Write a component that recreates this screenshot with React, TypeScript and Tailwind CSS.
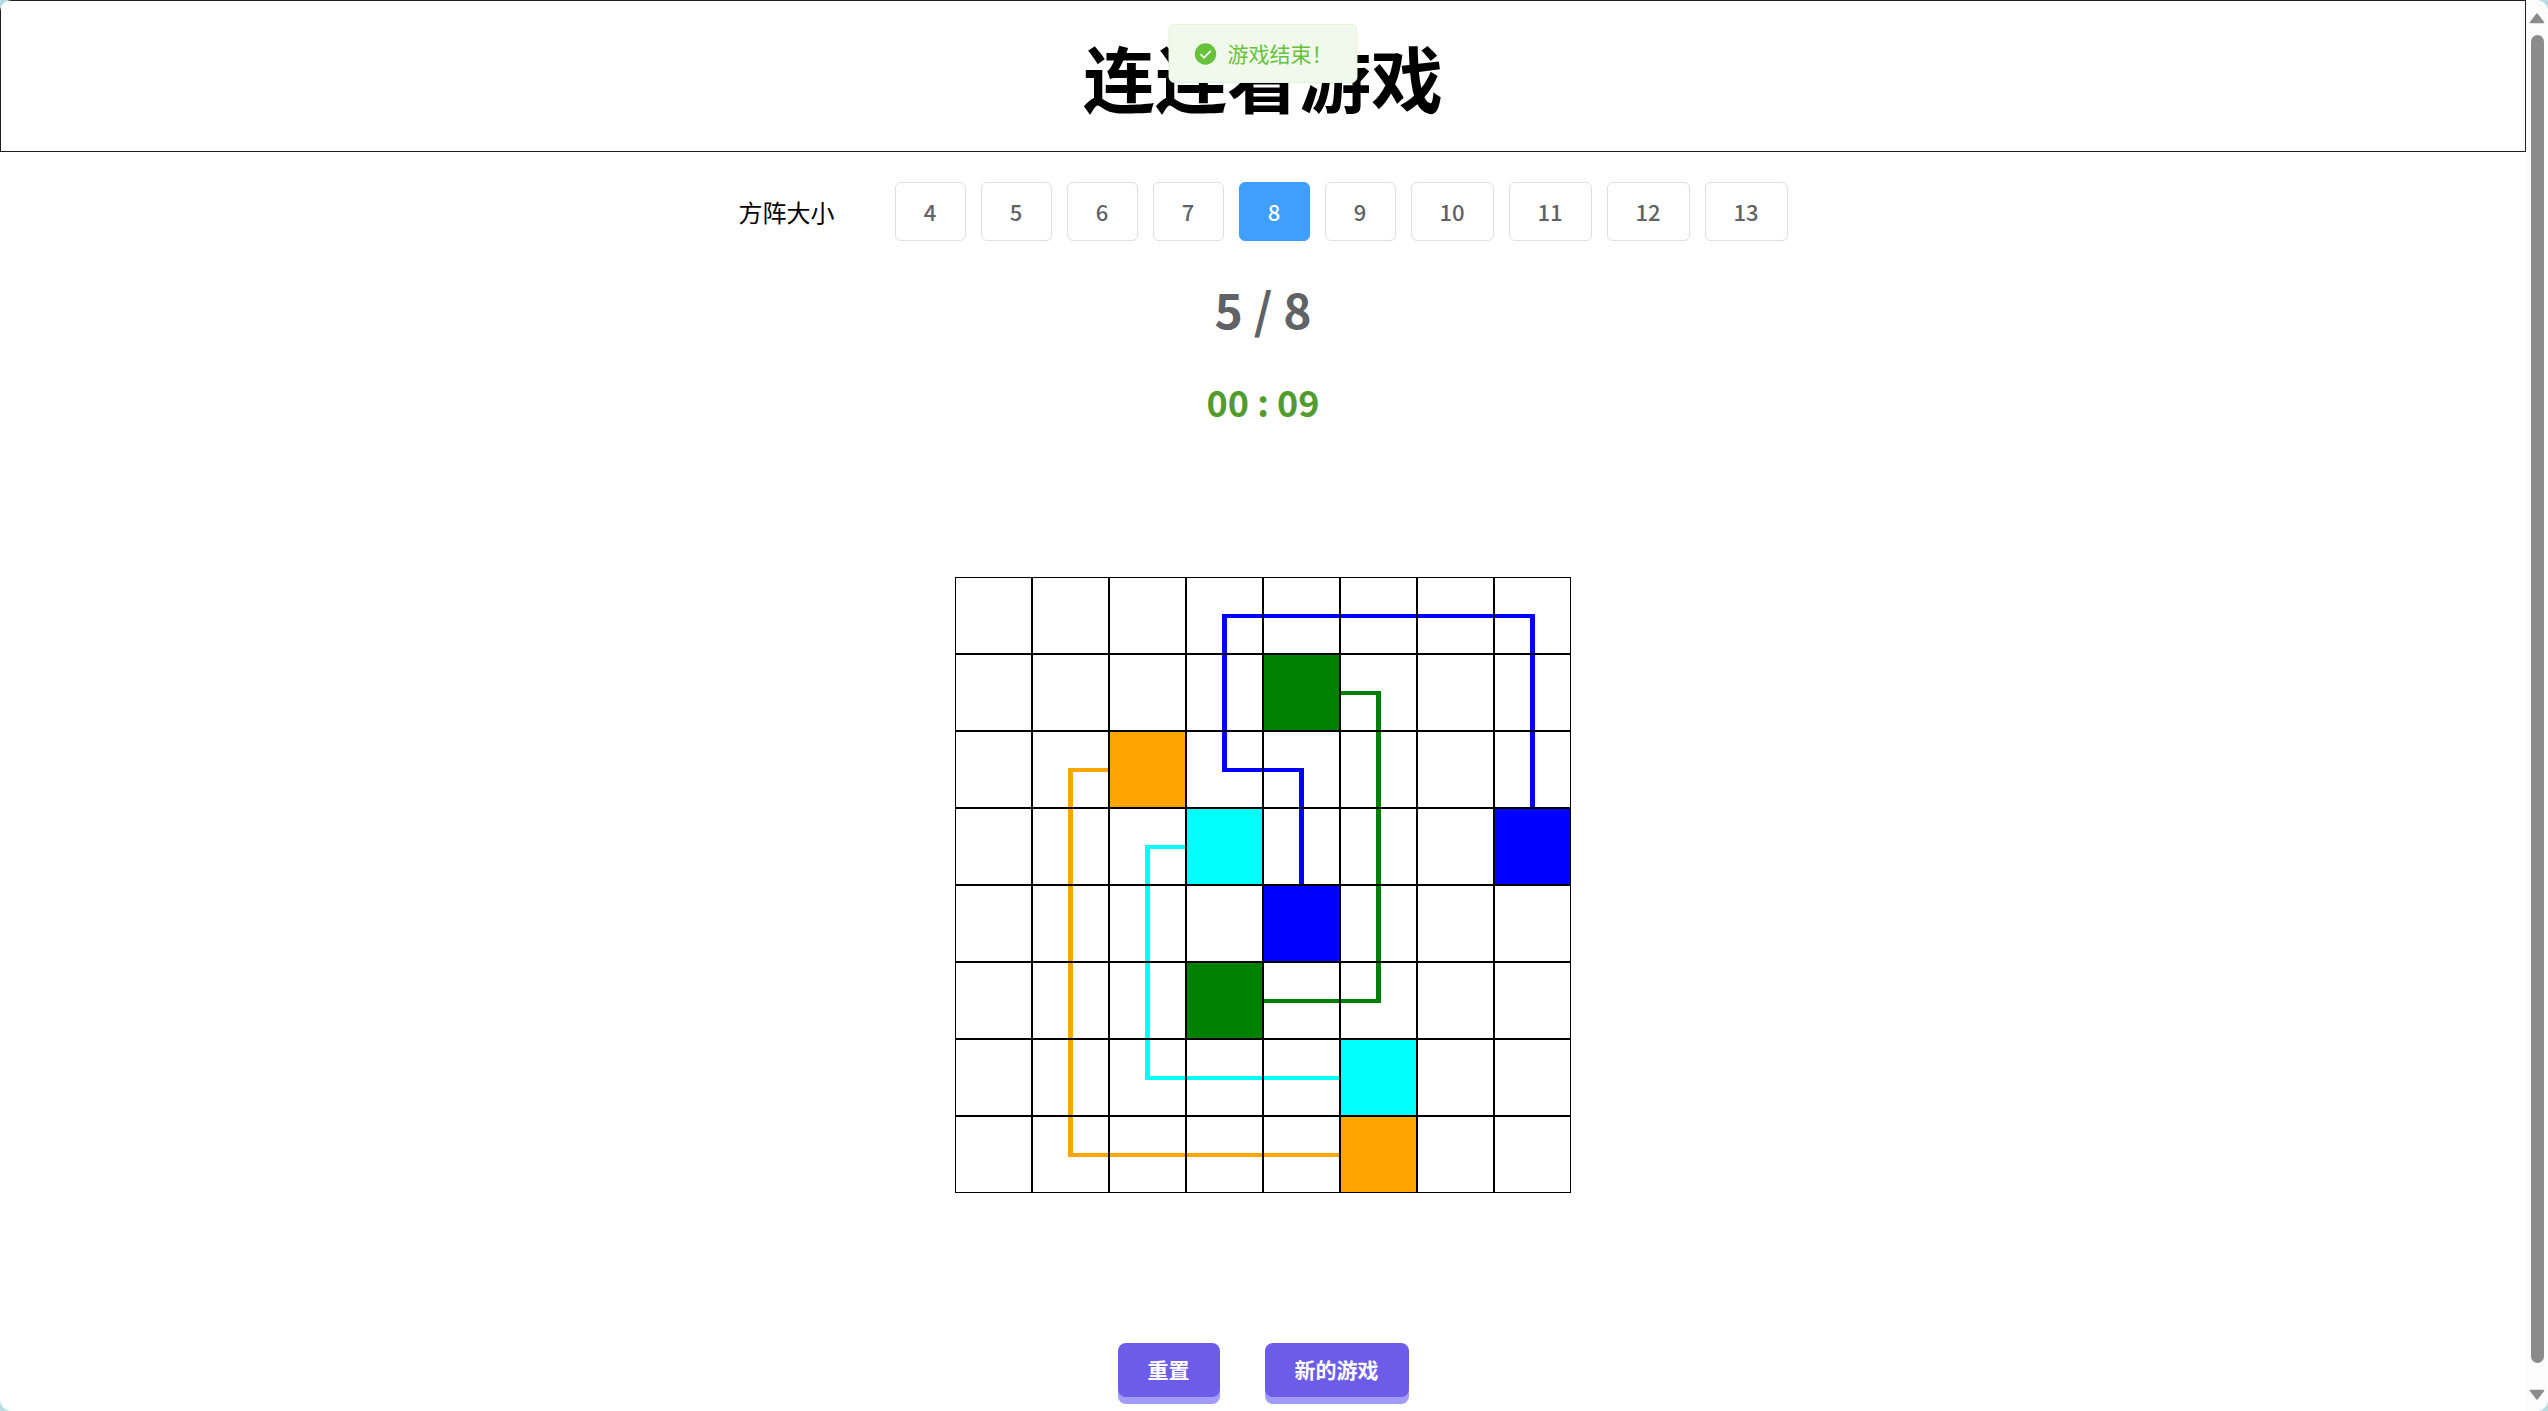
import { useState } from "react";

type Color = "blue" | "green" | "orange" | "cyan";

const FILL: Record<Color, string> = {
  blue: "bg-[#0000ff]",
  green: "bg-[#008000]",
  orange: "bg-[#ffa500]",
  cyan: "bg-[#00ffff]",
};

const SIZES = [4, 5, 6, 7, 8, 9, 10, 11, 12, 13];

// Each path runs from one coloured square to its partner, as [row, column] turning points.
const PATHS: { color: Color; points: [number, number][] }[] = [
  { color: "blue", points: [[4, 4], [2, 4], [2, 3], [0, 3], [0, 7], [3, 7]] },
  { color: "green", points: [[1, 4], [1, 5], [5, 5], [5, 3]] },
  { color: "orange", points: [[2, 2], [2, 1], [7, 1], [7, 5]] },
  { color: "cyan", points: [[3, 3], [3, 2], [6, 2], [6, 5]] },
];

interface CellState {
  color?: Color;
  solid?: boolean;
  up?: boolean;
  down?: boolean;
  left?: boolean;
  right?: boolean;
}

function buildBoard(size: number): CellState[] {
  const cells: CellState[] = Array.from({ length: size * size }, () => ({}));
  for (const { color, points } of PATHS) {
    let [r, c] = points[0];
    cells[r * size + c].solid = true;
    for (const [tr, tc] of points.slice(1)) {
      while (r !== tr || c !== tc) {
        const dr = Math.sign(tr - r);
        const dc = Math.sign(tc - c);
        const from = cells[r * size + c];
        const to = cells[(r + dr) * size + c + dc];
        from.color = color;
        to.color = color;
        if (dr > 0) (from.down = true), (to.up = true);
        if (dr < 0) (from.up = true), (to.down = true);
        if (dc > 0) (from.right = true), (to.left = true);
        if (dc < 0) (from.left = true), (to.right = true);
        r += dr;
        c += dc;
      }
    }
    cells[r * size + c].solid = true;
  }
  return cells;
}

function Cell({ cell }: { cell: CellState }) {
  const fill = cell.color ? FILL[cell.color] : "";
  if (cell.solid) return <div className={`size-[77px] border border-black ${fill}`} />;
  return (
    <div className="grid size-[77px] grid-cols-[35px_5px_35px] grid-rows-[36px_4px_35px] border border-black">
      {cell.color && <span className={`col-start-2 row-start-2 ${fill}`} />}
      {cell.up && <span className={`col-start-2 row-start-1 ${fill}`} />}
      {cell.down && <span className={`col-start-2 row-start-3 ${fill}`} />}
      {cell.left && <span className={`col-start-1 row-start-2 ${fill}`} />}
      {cell.right && <span className={`col-start-3 row-start-2 ${fill}`} />}
    </div>
  );
}

function Toast({ text }: { text: string }) {
  return (
    <div
      role="alert"
      className="absolute top-6 left-1/2 flex h-[59px] -translate-x-1/2 items-center gap-2.5 rounded-md border border-[#e1f3d8] bg-[#f0f9eb] px-6 text-[21px] leading-[21px] whitespace-nowrap text-[#67c23a]"
    >
      <svg viewBox="0 0 24 24" className="size-6" aria-hidden="true">
        <circle cx="12" cy="12" r="10.7" fill="#67c23a" />
        <path d="M7 12.2l3.5 3.5 6.8-6.8" fill="none" stroke="#f0f9eb" strokeWidth="1.8" />
      </svg>
      {text}
    </div>
  );
}

function ScrollBar() {
  return (
    <div className="flex w-[22px] shrink-0 flex-col items-center bg-[#fcfcfc] pt-3 pb-2.5" aria-hidden="true">
      <svg viewBox="0 0 16 12" className="h-3 w-4">
        <path d="M8 2L14.5 10.5H1.5Z" fill="#8b8b8b" stroke="#8b8b8b" strokeWidth="1.5" strokeLinejoin="round" />
      </svg>
      <div className="mt-[11px] mb-[26px] w-[13px] flex-1 rounded-full bg-[#8b8b8b]" />
      <svg viewBox="0 0 16 12" className="h-3 w-4">
        <path d="M8 10L14.5 1.5H1.5Z" fill="#8b8b8b" stroke="#8b8b8b" strokeWidth="1.5" strokeLinejoin="round" />
      </svg>
    </div>
  );
}

function ActionButton({ children }: { children: string }) {
  return (
    <button
      type="button"
      className="h-[54px] rounded-lg bg-[#6c5ce7] px-[30px] text-[21px] font-bold text-white shadow-[0_7px_0_#a29bfe]"
    >
      {children}
    </button>
  );
}

export default function App() {
  const [size, setSize] = useState(8);
  const board = buildBoard(8);

  return (
    <div className="min-h-screen bg-[#b9dce0] font-['Noto_Sans_CJK_SC',sans-serif]">
      <div className="flex min-h-screen overflow-hidden rounded-xl bg-white">
        <main className="relative flex min-w-0 flex-1 flex-col items-center">
          <header className="flex h-[152px] w-full items-center justify-center border border-[#1f1f1f]">
            <h1 className="text-7xl font-bold text-black">连连看游戏</h1>
          </header>
          <Toast text="游戏结束！" />

          <div className="mt-[30px] flex items-center gap-[60px]">
            <span id="size-label" className="text-2xl text-black">
              方阵大小
            </span>
            <div role="group" aria-labelledby="size-label" className="flex gap-[15px]">
              {SIZES.map((n) => (
                <button
                  key={n}
                  type="button"
                  aria-pressed={n === size}
                  onClick={() => setSize(n)}
                  className={`h-[59px] rounded-md border text-[22px] font-medium ${n > 9 ? "w-[83px]" : "w-[71px]"} ${
                    n === size ? "border-[#409eff] bg-[#409eff] text-white" : "border-[#dcdfe6] bg-white text-[#606266]"
                  }`}
                >
                  {n}
                </button>
              ))}
            </div>
          </div>

          <p className="mt-8 text-5xl leading-[70px] font-bold text-[#606266]">5 / 8</p>
          <p className="mt-8 text-4xl leading-[52px] font-bold text-[#529b2e]">00 : 09</p>

          <div className="mt-[150px] grid grid-cols-8">
            {board.map((cell, i) => (
              <Cell key={i} cell={cell} />
            ))}
          </div>

          <div className="mt-[150px] mb-3.5 flex gap-[45px]">
            <ActionButton>重置</ActionButton>
            <ActionButton>新的游戏</ActionButton>
          </div>
        </main>
        <ScrollBar />
      </div>
    </div>
  );
}
